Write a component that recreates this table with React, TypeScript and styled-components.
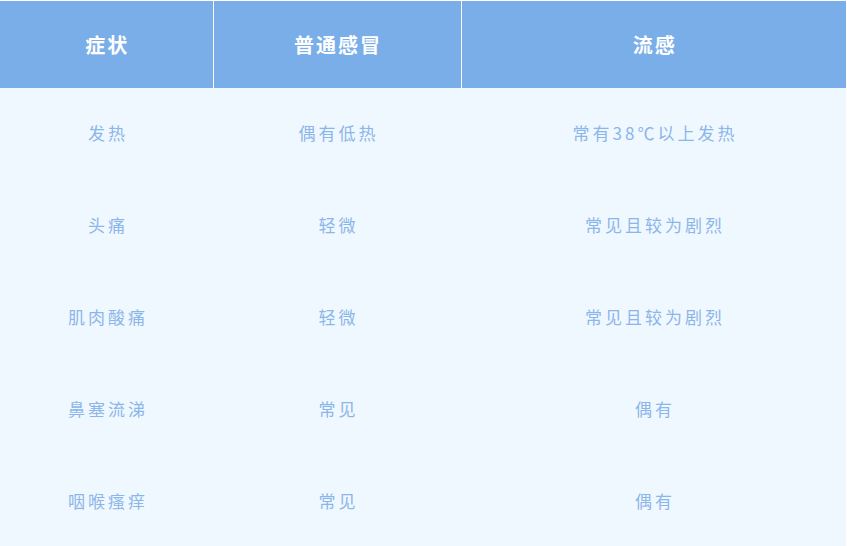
import React from "react";
import styled, { createGlobalStyle } from "styled-components";

const GlobalStyle = createGlobalStyle`
  html, body {
    margin: 0;
    padding: 0;
    background: #ffffff;
  }
  body {
    font-family: "Noto Sans CJK SC", "Noto Sans", sans-serif;
  }
`;

interface Row {
  symptom: string;
  cold: string;
  flu: string;
}

const rows: Row[] = [
  { symptom: "发热", cold: "偶有低热", flu: "常有38℃以上发热" },
  { symptom: "头痛", cold: "轻微", flu: "常见且较为剧烈" },
  { symptom: "肌肉酸痛", cold: "轻微", flu: "常见且较为剧烈" },
  { symptom: "鼻塞流涕", cold: "常见", flu: "偶有" },
  { symptom: "咽喉瘙痒", cold: "常见", flu: "偶有" },
];

const App: React.FC = () => {
  return (
    <>
      <GlobalStyle />
      <Page>
        <Table>
          <colgroup>
            <col style={{ width: 213 }} />
            <col style={{ width: 248 }} />
            <col />
          </colgroup>
          <thead>
            <tr>
              <HeadCell>症状</HeadCell>
              <HeadCell>普通感冒</HeadCell>
              <HeadCell>流感</HeadCell>
            </tr>
          </thead>
          <tbody>
            {rows.map((row) => (
              <tr key={row.symptom}>
                <BodyCell>{row.symptom}</BodyCell>
                <BodyCell>{row.cold}</BodyCell>
                <BodyCell>{row.flu}</BodyCell>
              </tr>
            ))}
          </tbody>
        </Table>
      </Page>
    </>
  );
};

const Page = styled.div`
  width: 846px;
  padding-top: 1px;
  height: 545px;
  overflow: hidden;
  background: #ffffff;
`;

const Table = styled.table`
  width: 100%;
  border-collapse: collapse;
  table-layout: fixed;
  background: #f0f8ff;
`;

const HeadCell = styled.th`
  height: 87px;
  padding: 0 0 0 2px;
  background: #7aaee8;
  color: #ffffff;
  font-size: 20px;
  font-weight: 700;
  letter-spacing: 2px;
  text-align: center;
  vertical-align: middle;
  border-right: 1px solid #ffffff;

  &:last-child {
    border-right: none;
  }
`;

const BodyCell = styled.td`
  height: 88px;
  padding: 0 0 4px 3px;
  color: #8cb6ea;
  font-size: 17px;
  letter-spacing: 3px;
  text-align: center;
  vertical-align: middle;
`;

export default App;
